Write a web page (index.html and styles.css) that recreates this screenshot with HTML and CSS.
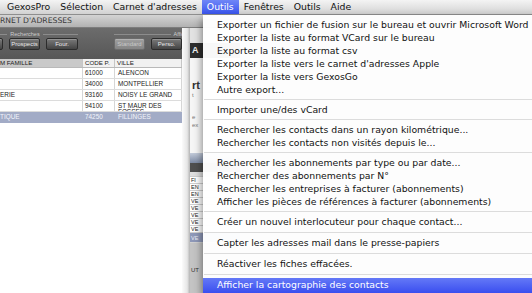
FILE: index.html
```html
<!DOCTYPE html>
<html lang="fr">
<head>
    <meta charset="UTF-8">
    <meta name="viewport" content="width=device-width, initial-scale=1.0">
    <title>GexosPro - Outils</title>
    <link rel="stylesheet" href="styles.css">
</head>
<body>

    <!-- Menu bar -->
    <div class="menubar">
        <span class="menu-title">GexosPro</span>
        <span class="menu-title">Sélection</span>
        <span class="menu-title">Carnet d'adresses</span>
        <span class="menu-title active">Outils</span>
        <span class="menu-title">Fenêtres</span>
        <span class="menu-title">Outils</span>
        <span class="menu-title">Aide</span>
    </div>

    <div class="desktop">
        <div class="window">
            <div class="titlebar">RNET D'ADRESSES</div>

            <div class="window-body">
                <!-- Left pane: toolbar and contact list -->
                <div class="list-pane">
                    <div class="toolbar">
                        <div class="group">
                            <div class="group-label">Recherches</div>
                            <div class="buttons">
                                <span class="btn"></span>
                                <span class="btn">Prospects</span>
                                <span class="btn">Four.</span>
                            </div>
                        </div>
                        <div class="group display">
                            <div class="group-label">Affichage</div>
                            <div class="buttons">
                                <span class="btn disabled">Standard</span>
                                <span class="btn">Perso.</span>
                            </div>
                        </div>
                    </div>

                    <div class="list-head">
                        <span>M FAMILLE</span>
                        <span>CODE P.</span>
                        <span>VILLE</span>
                    </div>
                    <div class="list-row">
                        <span></span>
                        <span>61000</span>
                        <span>ALENCON</span>
                    </div>
                    <div class="list-row">
                        <span></span>
                        <span>34000</span>
                        <span>MONTPELLIER</span>
                    </div>
                    <div class="list-row">
                        <span>ERIE</span>
                        <span>93160</span>
                        <span>NOISY LE GRAND</span>
                    </div>
                    <div class="list-row">
                        <span></span>
                        <span>94100</span>
                        <span class="wrap">ST MAUR DES FOSSES</span>
                    </div>
                    <div class="list-row selected">
                        <span>TIQUE</span>
                        <span>74250</span>
                        <span>FILLINGES</span>
                    </div>
                </div>

                <div class="splitter"></div>

                <!-- Right pane, mostly hidden by the menu -->
                <div class="detail">
                    <div class="d-top"></div>
                    <div class="d-banner">A</div>
                    <div class="d-body">
                        <div class="d-title">rt</div>
                        <div class="d-text">t</div>
                        <div class="d-text low">e</div>
                        <div class="d-text">ex</div>
                    </div>
                    <div class="d-bar"></div>
                    <div class="d-tools"></div>
                    <div class="d-list">
                        <div class="d-row head"></div>
                        <div class="d-row">FI</div>
                        <div class="d-row">EN</div>
                        <div class="d-row">EN</div>
                        <div class="d-row">VE</div>
                        <div class="d-row">VE</div>
                        <div class="d-row">VE</div>
                        <div class="d-row">VE</div>
                        <div class="d-row">VE</div>
                        <div class="d-row selected">VE</div>
                    </div>
                    <div class="d-foot">UT</div>
                </div>
            </div>
        </div>
    </div>

    <!-- Open "Outils" menu -->
    <ul class="dropdown">
        <li>Exporter un fichier de fusion sur le bureau et ouvrir Microsoft Word</li>
        <li>Exporter la liste au format VCard sur le bureau</li>
        <li>Exporter la liste au format csv</li>
        <li>Exporter la liste vers le carnet d'adresses Apple</li>
        <li>Exporter la liste vers GexosGo</li>
        <li>Autre export...</li>
        <li class="sep"></li>
        <li>Importer une/des vCard</li>
        <li class="sep"></li>
        <li>Rechercher les contacts dans un rayon kilométrique...</li>
        <li>Rechercher les contacts non visités depuis le...</li>
        <li class="sep"></li>
        <li>Rechercher les abonnements par type ou par date...</li>
        <li>Rechercher des abonnements par N°</li>
        <li>Rechercher les entreprises à facturer (abonnements)</li>
        <li>Afficher les pièces de références à facturer (abonnements)</li>
        <li class="sep"></li>
        <li>Créer un nouvel interlocuteur pour chaque contact...</li>
        <li class="sep wide"></li>
        <li>Capter les adresses mail dans le presse-papiers</li>
        <li class="sep wide"></li>
        <li>Réactiver les fiches effacées.</li>
        <li class="sep wide"></li>
        <li class="active">Afficher la cartographie des contacts</li>
    </ul>

</body>
</html>
```

FILE: styles.css
```css
* {
    box-sizing: border-box;
}

body {
    margin: 0;
    width: 532px;
    height: 293px;
    overflow: hidden;
    position: relative;
    background: #bdbdbd;
    font-family: "DejaVu Sans", Verdana, sans-serif;
    color: #111;
}

/* Menu bar */
.menubar {
    display: flex;
    height: 15px;
    padding-left: 2px;
    background: linear-gradient(#f4f4f4, #d2d2d2);
    border-bottom: 1px solid #8e8e8e;
    font-size: 9.3px;
    line-height: 14px;
}

.menu-title {
    padding: 0 5px;
    white-space: nowrap;
}

.menu-title.active {
    background: linear-gradient(#6f86f7, #3a55ee);
    color: #fff;
}

/* Windows behind the menu */
.desktop {
    display: flex;
    height: 278px;
}

.window {
    width: 240px;
    display: flex;
    flex-direction: column;
    background: #fff;
}

.titlebar {
    height: 13px;
    background: linear-gradient(#d4d4d4, #b2b2b2);
    border-bottom: 1px solid #7d7d7d;
    color: #3a3a3a;
    font-size: 7.7px;
    line-height: 12px;
    white-space: nowrap;
}

.window-body {
    flex: 1;
    display: flex;
    min-height: 0;
}

/* Left pane */
.list-pane {
    width: 182px;
    display: flex;
    flex-direction: column;
    overflow: hidden;
    background: #fff;
    font-family: "Liberation Sans", Arial, sans-serif;
}

.toolbar {
    height: 31px;
    flex-shrink: 0;
    display: flex;
    gap: 36px;
    padding-top: 2px;
    background: linear-gradient(#6c6c6c, #575757);
}

.group {
    display: flex;
    flex-direction: column;
    flex-shrink: 0;
}

.group:first-child {
    margin-left: -28px;
}

.group.display {
    width: 142px;
}

.group-label {
    display: flex;
    align-items: center;
    gap: 3px;
    height: 8px;
    font-size: 5.5px;
    color: #cdcdcd;
    white-space: nowrap;
}

.group-label::before,
.group-label::after {
    content: "";
    flex: 1;
    height: 1px;
    background: #8c8c8c;
}

.buttons {
    display: flex;
    gap: 6px;
}

.btn {
    width: 31px;
    height: 12px;
    border: 1px solid #2c2c2c;
    border-radius: 2px;
    background: linear-gradient(#7a7a7a, #444);
    box-shadow: inset 0 1px rgba(255, 255, 255, 0.2);
    color: #e8e8e8;
    font-size: 6px;
    line-height: 10px;
    text-align: center;
    white-space: nowrap;
}

.btn:nth-child(3) {
    width: 32px;
}

.btn.disabled {
    border-color: #6c6c6c;
    background: linear-gradient(#a0a0a0, #858585);
    color: #c9c9c9;
}

.list-head,
.list-row {
    display: grid;
    grid-template-columns: 83px 32px 67px;
    flex-shrink: 0;
}

.list-head {
    height: 9px;
    border-bottom: 1px solid #b9b9b9;
    font-size: 6.2px;
    line-height: 8px;
    color: #222;
}

.list-head span {
    padding-left: 2px;
    background: #f1f1f1;
    border-right: 1px solid #c6c6c6;
    white-space: nowrap;
    overflow: hidden;
}

.list-head span:first-child {
    padding-left: 0;
    background: #c9c9c9;
}

.list-row {
    height: 11px;
    border-bottom: 1px solid #dcdcdc;
    font-size: 6.4px;
    line-height: 10px;
    color: #222;
}

.list-row span {
    padding-left: 2px;
    border-right: 1px solid #d6d6d6;
    white-space: nowrap;
    overflow: hidden;
}

.list-row span:first-child {
    padding-left: 0;
}

.list-row span:nth-child(3) {
    padding-left: 3px;
}

.list-row .wrap {
    white-space: normal;
    line-height: 6px;
    padding-top: 2px;
}

.list-row.selected {
    background: #a2abc6;
    border-bottom-color: #a2abc6;
    color: #f3f5fb;
}

.list-row.selected span {
    border-right-color: #a2abc6;
}

.splitter {
    width: 8px;
    background: linear-gradient(to right, #fbfbfb, #e6e6e6 65%, #b4b4b4);
}

/* Right pane */
.detail {
    flex: 1;
    display: flex;
    flex-direction: column;
    overflow: hidden;
    background: #c3c3c3;
    font-family: "Liberation Sans", Arial, sans-serif;
    white-space: nowrap;
}

.d-top {
    height: 15px;
    background: #e2e2e2;
}

.d-banner {
    height: 15px;
    padding-left: 2px;
    background: #2e2e2e;
    color: #f2f2f2;
    font-weight: bold;
    font-size: 9px;
    line-height: 15px;
}

.d-body {
    height: 95px;
    padding: 21px 0 0 2px;
    background: #f6f6f6;
    color: #777;
    font-size: 6px;
}

.d-title {
    color: #333;
    font-size: 11px;
    font-weight: bold;
    line-height: 12px;
}

.d-text {
    line-height: 8px;
}

.d-text.low {
    margin-top: 14px;
}

.d-bar {
    height: 10px;
    background: linear-gradient(#c3cbda, #7d8aa4);
}

.d-tools {
    height: 9px;
    background: #4f4f4f;
}

.d-list {
    background: #fff;
    color: #222;
    font-size: 5.5px;
}

.d-row {
    height: 7px;
    padding-left: 1px;
    border-bottom: 1px solid #d0d0d0;
    line-height: 6px;
}

.d-row.head {
    height: 5px;
    background: #dedede;
}

.d-row.selected {
    height: 10px;
    line-height: 10px;
    background: #8e98b8;
    color: #eef0f6;
}

.d-foot {
    flex: 1;
    padding: 24px 0 0 1px;
    background: #c4c4c4;
    color: #333;
    font-size: 6px;
}

/* Open menu */
.dropdown {
    position: absolute;
    top: 15px;
    left: 203px;
    width: 340px;
    margin: 0;
    padding: 3px 0 0;
    list-style: none;
    background: rgba(255, 255, 255, 0.97);
    box-shadow: -1px 4px 8px rgba(0, 0, 0, 0.45);
    font-size: 9.3px;
    color: #111;
}

.dropdown li {
    height: 13px;
    padding-left: 14px;
    line-height: 13px;
    white-space: nowrap;
}

.dropdown li.sep {
    height: 7px;
    padding: 3px 0 0 1px;
}

.dropdown li.sep.wide {
    height: 8px;
    padding-top: 4px;
}

.dropdown li.sep::after {
    content: "";
    display: block;
    height: 1px;
    background: #dcdcdc;
}

.dropdown li.active {
    height: 15px;
    background: linear-gradient(#6479f7, #3a4eef);
    color: #fff;
}
```
